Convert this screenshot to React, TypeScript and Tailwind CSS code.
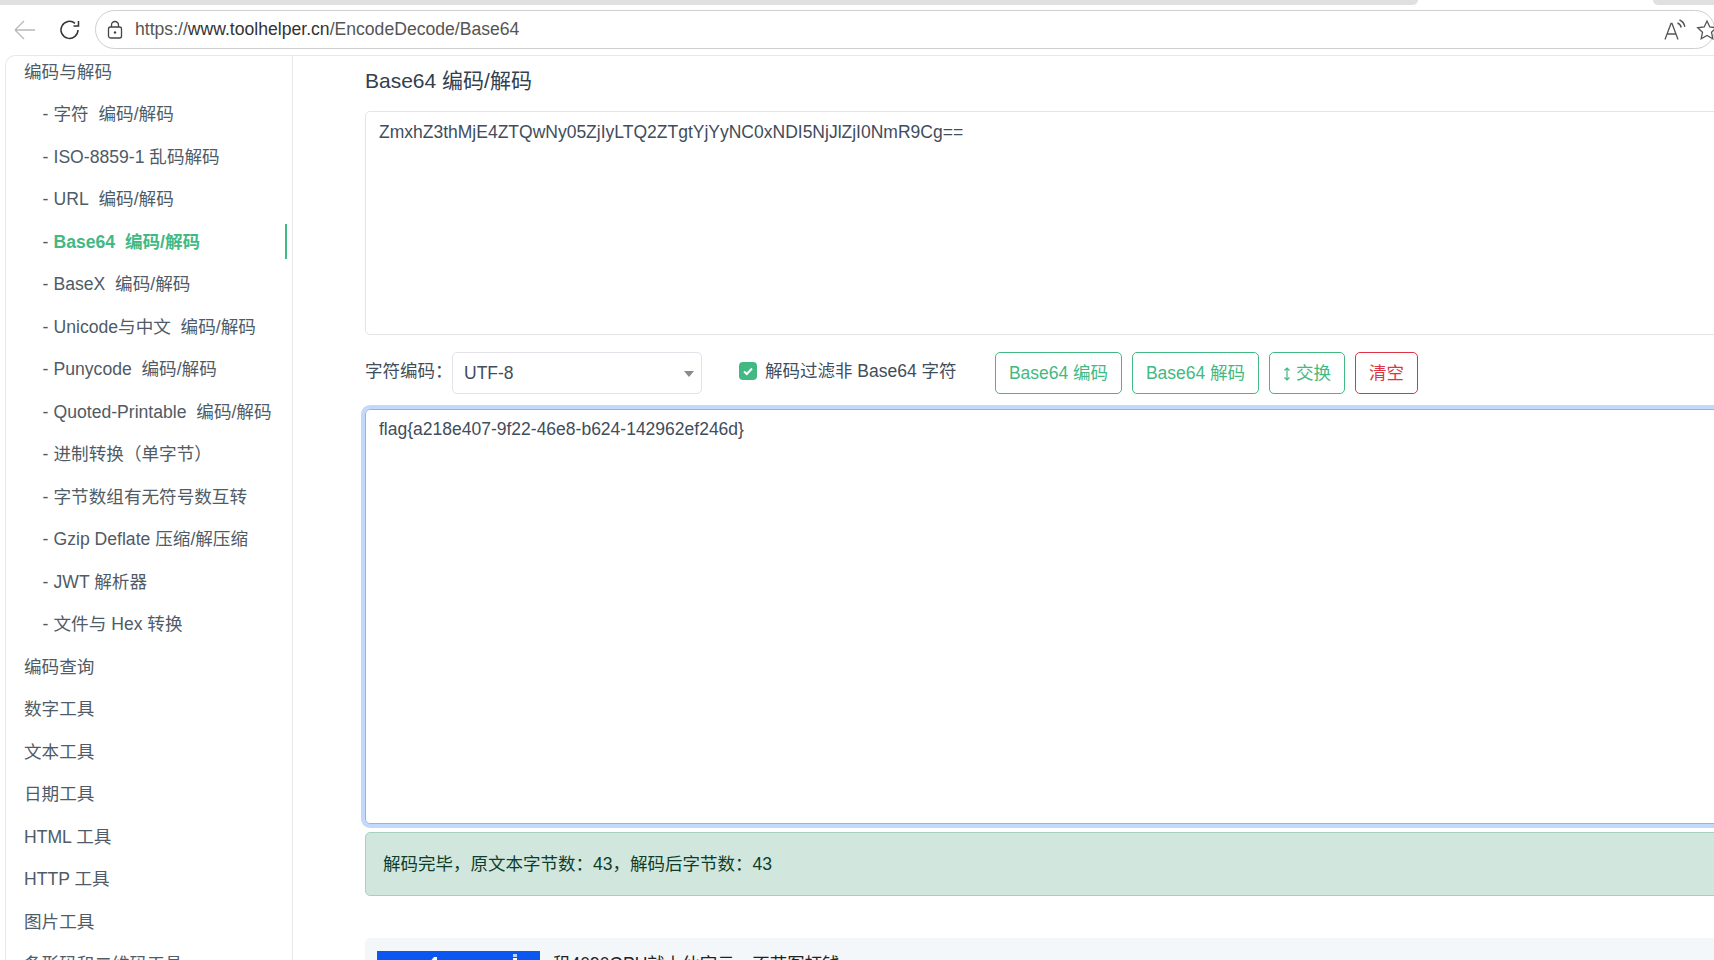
import type { ReactNode } from 'react'

const SUB_ITEMS = [
  '字符\u00a0\u00a0编码/解码',
  'ISO-8859-1 乱码解码',
  'URL\u00a0\u00a0编码/解码',
  'Base64\u00a0\u00a0编码/解码',
  'BaseX\u00a0\u00a0编码/解码',
  'Unicode与中文\u00a0\u00a0编码/解码',
  'Punycode\u00a0\u00a0编码/解码',
  'Quoted-Printable\u00a0\u00a0编码/解码',
  '进制转换（单字节）',
  '字节数组有无符号数互转',
  'Gzip Deflate 压缩/解压缩',
  'JWT 解析器',
  '文件与 Hex 转换',
]

const GROUPS = ['编码查询', '数字工具', '文本工具', '日期工具', 'HTML 工具', 'HTTP 工具', '图片工具', '条形码和二维码工具']

function Toolbar() {
  return (
    <div className="flex h-[50px] shrink-0 pt-[5px]">
      <svg width="95" height="39" viewBox="0 0 95 39" fill="none" className="shrink-0">
        <path d="M15 25h20M15 25l9-9M15 25l9 9" transform="translate(0 -5)" stroke="#b8b8b8" strokeWidth="1.3" />
        <path d="M78 20a8.5 8.5 0 1 1-3-6.6" stroke="#333" strokeWidth="1.5" />
        <path d="M78.5 11v5h-5" stroke="#333" strokeWidth="1.5" />
      </svg>
      <div className="flex h-[39px] w-[1620px] shrink-0 items-center rounded-[20px] border border-[#cfcfcf] pl-[10px]">
        <svg width="18" height="20" viewBox="0 0 18 20" fill="none" className="shrink-0">
          <rect x="2.5" y="7" width="13" height="11" rx="2" stroke="#444" strokeWidth="1.3" />
          <path d="M5.5 7V5a3.5 3.5 0 0 1 7 0v2" stroke="#444" strokeWidth="1.3" />
          <circle cx="9" cy="12.5" r="1.2" fill="#444" />
        </svg>
        <span className="ml-[11px] text-[17.6px] text-[#555]">
          https://<span className="text-[#333]">www.toolhelper.cn</span>/EncodeDecode/Base64
        </span>
        <svg width="24" height="24" viewBox="0 0 24 24" fill="none" className="ml-auto mr-[8px] shrink-0">
          <path d="M2 21.5l6-16h1l6 16M4.5 16h8" stroke="#555" strokeWidth="1.3" />
          <path d="M14.5 5c2 .8 3.3 2.4 3.7 4.5M16.5 2c3 1.2 4.8 3.5 5.3 6.8" stroke="#555" strokeWidth="1.4" />
        </svg>
        <svg width="24" height="24" viewBox="0 0 24 24" fill="none" className="-mr-[5px] shrink-0">
          <path d="M12 3l2.8 6 6.5.8-4.8 4.4 1.3 6.5L12 17.5l-5.8 3.2 1.3-6.5L2.7 9.8 9.2 9z" stroke="#555" strokeWidth="1.3" />
        </svg>
      </div>
    </div>
  )
}

function Sidebar() {
  return (
    <aside className="w-[287px] shrink-0 overflow-hidden border-r border-[#e8e8e8] text-[17.6px] text-[#4f5b66]">
      <ul className="-mt-[5.5px]">
        <li className="flex h-[42.5px] items-center pl-[18px]">编码与解码</li>
        {SUB_ITEMS.map((item, i) => (
          <li key={item} className="relative flex h-[42.5px] items-center pl-[36.5px] whitespace-nowrap">
            <span className="w-[11px] shrink-0">-</span>
            <span className={i === 3 ? 'font-bold text-[#42b983]' : ''}>{item}</span>
            {i === 3 && <span className="absolute right-[5px] top-[3px] h-[35px] w-[2px] bg-[#42b983]" />}
          </li>
        ))}
        {GROUPS.map((item) => (
          <li key={item} className="flex h-[42.5px] items-center pl-[18px]">{item}</li>
        ))}
      </ul>
    </aside>
  )
}

function OutlineButton({ children, className }: { children: ReactNode; className: string }) {
  return (
    <button type="button" className={`flex h-[41.5px] items-center justify-center rounded-[5px] border bg-white ${className}`}>
      {children}
    </button>
  )
}

export default function App() {
  return (
    <div className="flex h-[960px] w-[1714px] flex-col overflow-hidden bg-white [font-family:'Liberation_Sans','Noto_Sans_CJK_SC',sans-serif]">
      <div className="flex h-[5px] shrink-0 justify-between">
        <div className="w-[1418px] rounded-br-[8px] bg-[#e0e0e0]" />
        <div className="w-[61px] rounded-bl-[8px] bg-[#e0e0e0]" />
      </div>
      <Toolbar />
      <div className="ml-[5px] flex min-h-0 flex-1 overflow-hidden rounded-tl-[10px] border-l border-t border-[#e8e8e8]">
        <Sidebar />
        <main className="w-[1500px] shrink-0 pl-[72px] pt-[11.5px] text-[17.5px] text-[#3f4d5c]">
          <h1 className="text-[21px] leading-[26px] text-[#33404d]">Base64 编码/解码</h1>
          <textarea
            readOnly
            defaultValue="ZmxhZ3thMjE4ZTQwNy05ZjIyLTQ2ZTgtYjYyNC0xNDI5NjJlZjI0NmR9Cg=="
            className="mt-[17.5px] block h-[224px] w-full resize-none rounded-[5px] border border-[#e5e5e5] px-[13px] py-[7px] leading-[26px] outline-none"
          />
          <div className="mt-[17px] flex h-[41.5px] items-center">
            <span className="w-[87px] shrink-0 whitespace-nowrap pb-[4px]">字符编码：</span>
            <div className="flex h-full w-[250px] shrink-0 items-center justify-between rounded-[5px] border border-[#e2e2e8] pl-[11px] pr-[7px]">
              UTF-8
              <span className="mt-[2px] h-0 w-0 border-x-[5px] border-t-[6px] border-x-transparent border-t-[#8a8a8a]" />
            </div>
            <span className="mb-[4px] ml-[37px] flex h-[18px] w-[18px] shrink-0 items-center justify-center rounded-[4px] bg-[#42b983]">
              <svg width="12" height="12" viewBox="0 0 12 12" fill="none">
                <path d="M2 6.5l2.8 2.5L10 3.5" stroke="#fff" strokeWidth="2" />
              </svg>
            </span>
            <span className="ml-[8px] w-[230px] shrink-0 whitespace-nowrap pb-[4px]">解码过滤非 Base64 字符</span>
            <div className="flex gap-[10px]">
              <OutlineButton className="w-[127px] border-[#42b983] text-[#42b983]">Base64 编码</OutlineButton>
              <OutlineButton className="w-[127px] border-[#42b983] text-[#42b983]">Base64 解码</OutlineButton>
              <OutlineButton className="w-[76px] border-[#42b983] text-[#42b983]">
                <svg width="8" height="14" viewBox="0 0 8 14" fill="none" className="mr-[5px] mt-[2px]">
                  <path d="M4 1v12M1.5 3.5L4 1l2.5 2.5M1.5 10.5L4 13l2.5-2.5" stroke="#42b983" strokeWidth="1.2" />
                </svg>
                交换
              </OutlineButton>
              <OutlineButton className="w-[63px] border-[#dc3545] text-[#dc3545]">清空</OutlineButton>
            </div>
          </div>
          <textarea
            readOnly
            defaultValue="flag{a218e407-9f22-46e8-b624-142962ef246d}"
            className="mt-[15px] block h-[415px] w-full resize-none rounded-[5px] border border-[#86b7fe] px-[13px] py-[6px] leading-[26px] outline-none ring-[4px] ring-[#c2d9fc]"
          />
          <div className="mt-[8.5px] flex h-[64px] items-center rounded-[5px] border border-[#a8d0be] bg-[#d1e7dd] pl-[17px] text-[#0f3d2c]">
            解码完毕，原文本字节数：43，解码后字节数：43
          </div>
          <div className="mt-[42px] flex h-[60px] gap-[13px] rounded-[5px] bg-[#f4f7fa] pl-[12px] pt-[13px] text-[#222]">
            <div className="h-[40px] w-[163px] shrink-0 bg-[#0b57f0]">
              <svg width="163" height="40" viewBox="0 0 163 40">
                <path d="M52 12l5-6h3v6z" fill="#fff" />
                <rect x="136" y="3" width="4" height="3" fill="#bcd2ff" />
                <rect x="136" y="7" width="4" height="8" fill="#fff" />
              </svg>
            </div>
            <span className="leading-[26px]">租4090GPU就上仙宫云，不花冤枉钱</span>
          </div>
        </main>
      </div>
    </div>
  )
}
